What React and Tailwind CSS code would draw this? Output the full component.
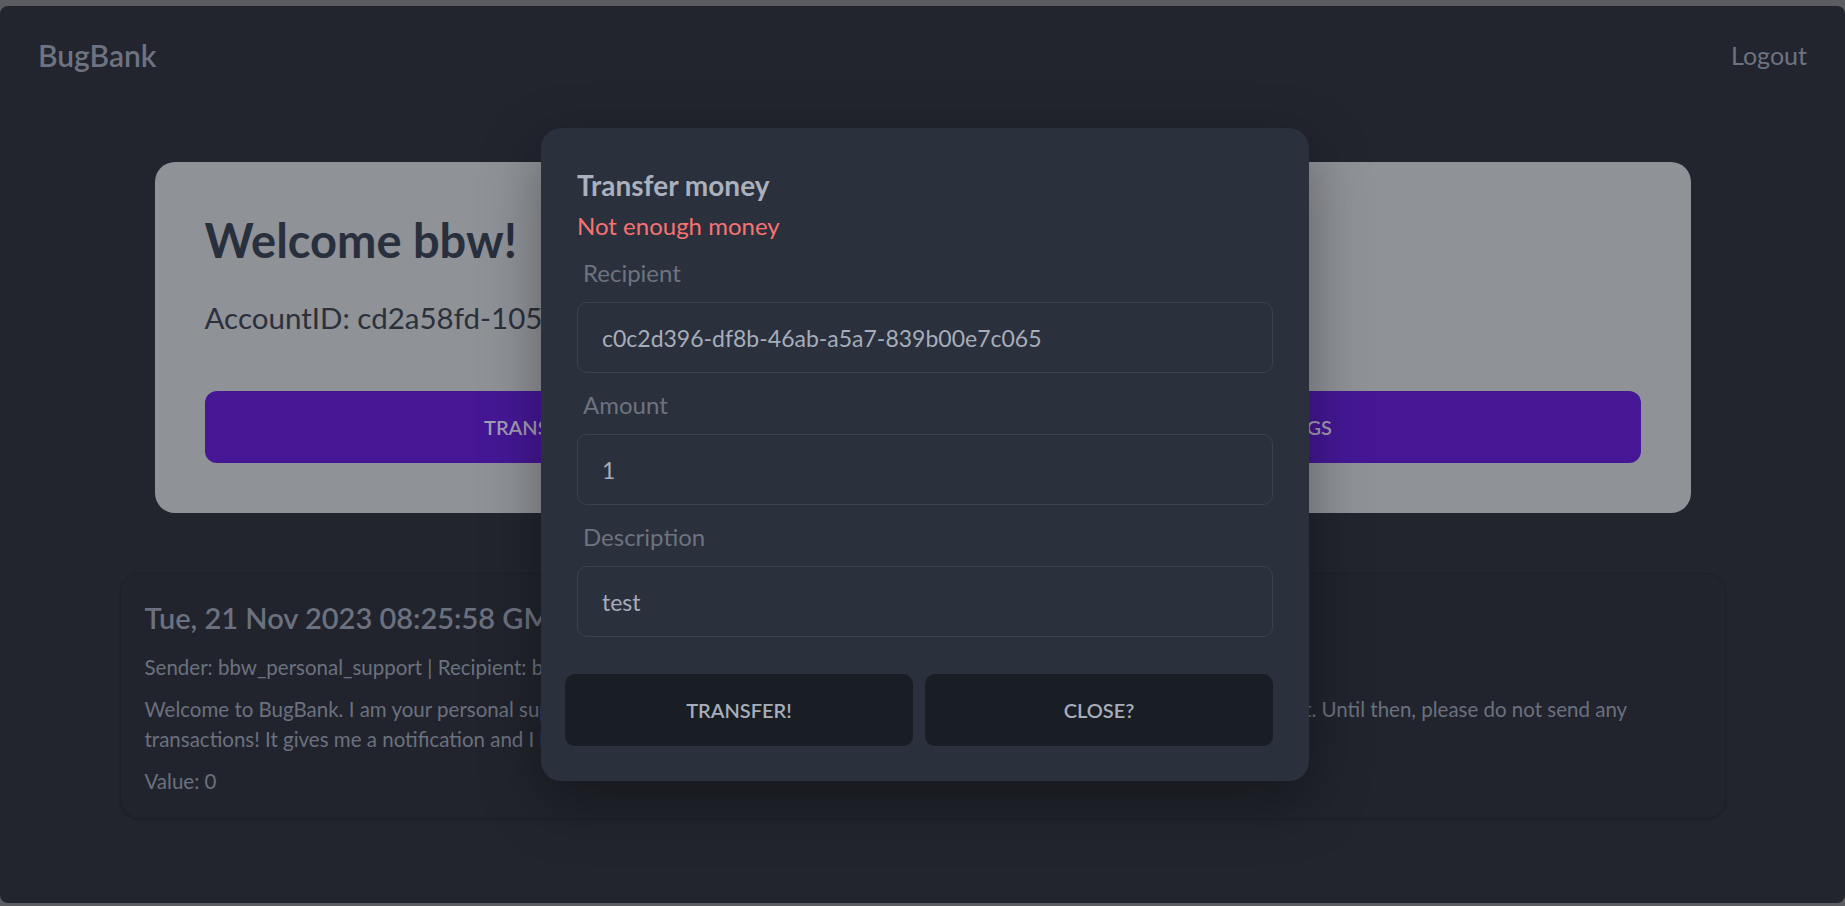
import { useState } from "react";

const font = { fontFamily: "Lato, 'Noto Sans', sans-serif" };

const Field = ({ label, value, onChange }) => (
  <div className="flex flex-col">
    <label className="px-[6px] pt-[16px] pb-[13px] text-[24px] leading-[32px] text-[#6d7380]">
      {label}
    </label>
    <input
      type="text"
      value={value}
      onChange={onChange}
      className="h-[71px] w-full rounded-[10px] border border-[#3b414d] bg-[#2a303c] px-[24px] text-[23px] text-[#a6adbb] outline-none"
    />
  </div>
);

const App = () => {
  const [form, setForm] = useState({
    recipient: "c0c2d396-df8b-46ab-a5a7-839b00e7c065",
    amount: "1",
    description: "test",
  });

  const set = (name) => (e) => setForm({ ...form, [name]: e.target.value });

  return (
    <div className="min-h-screen bg-[#5c5d62] pt-[6px]" style={font}>
      <div className="relative h-[897px] overflow-hidden rounded-[8px] bg-[#22252e]">
        {/* Navbar */}
        <div className="flex items-center justify-between pl-[38px] pr-[38px] pt-[29px]">
          <span className="text-[30px] font-semibold leading-[40px] text-[#6d7381]">BugBank</span>
          <button className="text-[25px] leading-[40px] text-[#6d7381]">Logout</button>
        </div>

        {/* Welcome card */}
        <div className="mx-auto mt-[87px] w-[1536px] rounded-[20px] bg-[#8f9297] p-[50px]">
          <h1 className="text-[47px] font-bold leading-[56px] text-[#282f3d]">Welcome bbw!</h1>
          <p className="mt-[30px] text-[29.5px] leading-[40px] text-[#2b303b]">
            AccountID: cd2a58fd-1056-4b8e-9c2a-7f3e1d5b8a90
          </p>
          <div className="mt-[53px] flex gap-[16px]">
            <button className="h-[72px] flex-1 rounded-[12px] bg-[#451795] text-[20px] font-semibold text-[#a19db2]">
              TRANSACTIONS
            </button>
            <button className="h-[72px] flex-1 rounded-[12px] bg-[#451795] text-[20px] font-semibold text-[#a19db2]">
              SETTINGS
            </button>
          </div>
        </div>

        {/* Transactions */}
        <div className="mx-auto mt-[60px] w-[1606px] rounded-[20px] border border-[#1d2027] bg-[#21242c] px-[24px] pt-[24px] pb-[22px] shadow-sm">
          <h2 className="text-[29px] font-semibold leading-[40px] text-[#6b717e]">
            Tue, 21 Nov 2023 08:25:58 GMT
          </h2>
          <p className="mt-[14px] text-[20.5px] leading-[30px] text-[#6b717e]">
            Sender: bbw_personal_support | Recipient: bbw
          </p>
          <p className="mt-[12px] text-[20.5px] leading-[30px] text-[#6b717e]">
            Welcome to BugBank. I am your personal support assistant. I will personally reach out to you soon to verify and open your account. Until then, please do not send any
            transactions! It gives me a notification and I have to check them.
          </p>
          <p className="mt-[12px] text-[20.5px] leading-[30px] text-[#6b717e]">Value: 0</p>
        </div>

        {/* Modal */}
        <div className="absolute inset-0 flex items-center justify-center pl-[5px]">
          <div className="flex h-[653px] w-[768px] flex-col rounded-[20px] bg-[#2a303c] px-[36px] pt-[40px] shadow-[0_20px_60px_rgba(0,0,0,0.35)]">
            <h3 className="text-[28px] font-bold leading-[34px] text-[#a9b0be]">Transfer money</h3>
            <p className="mt-[9px] text-[24px] leading-[30px] text-[#f87272]">Not enough money</p>
            <Field label="Recipient" value={form.recipient} onChange={set("recipient")} />
            <Field label="Amount" value={form.amount} onChange={set("amount")} />
            <Field label="Description" value={form.description} onChange={set("description")} />
            <div className="-ml-[12px] mt-[37px] flex gap-[12px]">
              <button className="h-[72px] flex-1 rounded-[10px] bg-[#191d24] text-[20px] font-semibold text-[#a6adbb]">
                TRANSFER!
              </button>
              <button className="h-[72px] flex-1 rounded-[10px] bg-[#191d24] text-[20px] font-semibold text-[#a6adbb]">
                CLOSE?
              </button>
            </div>
          </div>
        </div>
      </div>
    </div>
  );
};

export default App;
